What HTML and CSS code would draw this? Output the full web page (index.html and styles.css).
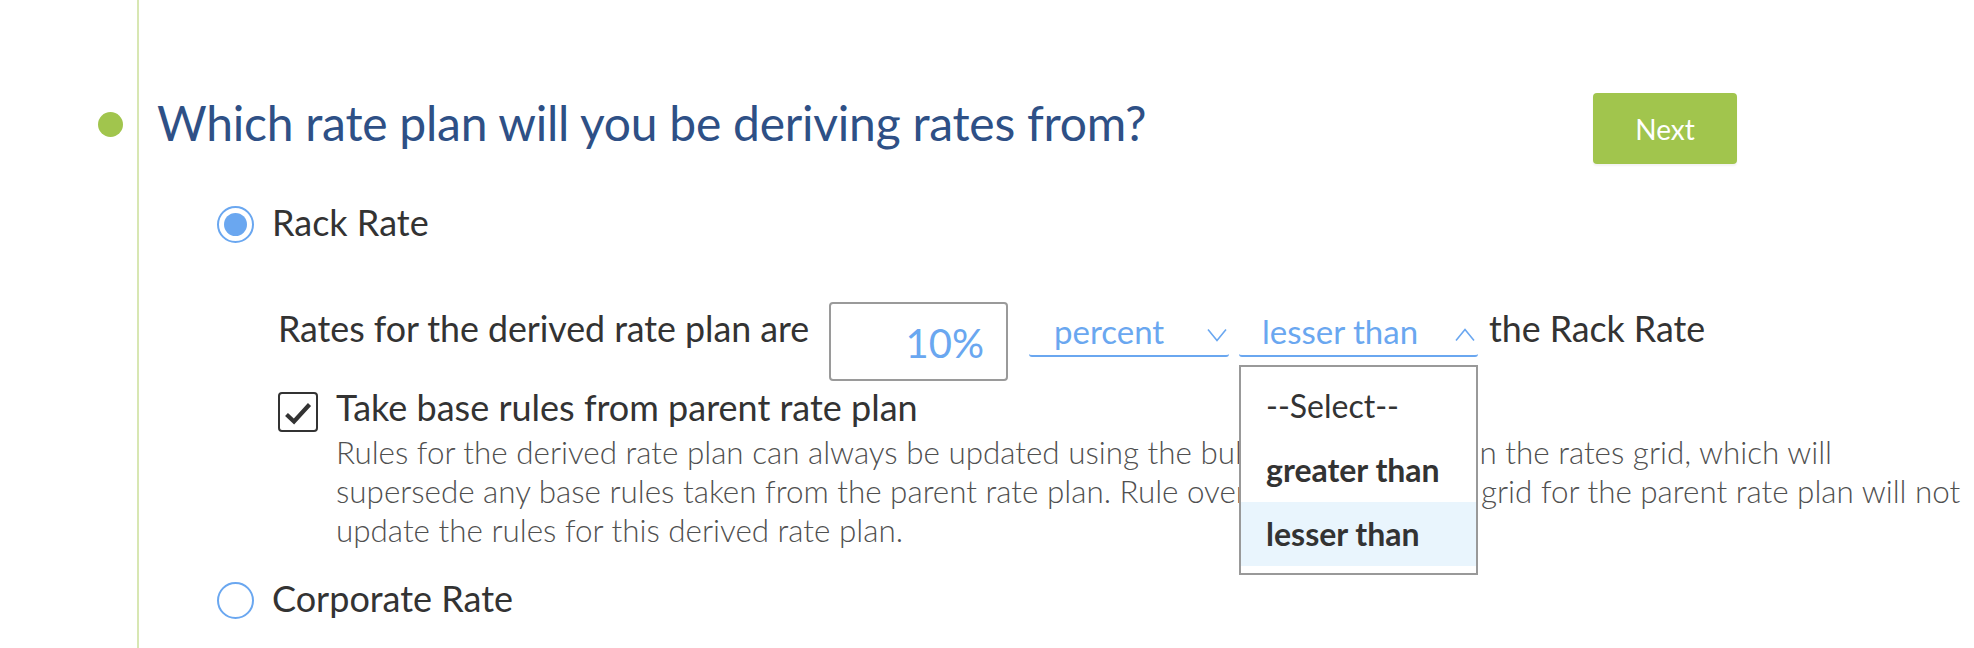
FILE: index.html
```html
<!DOCTYPE html>
<html lang="en">
<head>
<meta charset="utf-8">
<title>Derived rate plan</title>
<link rel="stylesheet" href="styles.css">
</head>
<body>
<div class="timeline">
  <section class="step">
    <div class="step-head">
      <span class="step-dot"></span>
      <h1 class="step-title">Which rate plan will you be deriving rates from?</h1>
      <button class="btn-next" type="button">Next</button>
    </div>

    <div class="option">
      <div class="option-row">
        <span class="radio radio-checked"><span class="radio-dot"></span></span>
        <span class="option-label">Rack Rate</span>
      </div>

      <div class="option-body">
        <div class="rate-row">
          <span class="rate-label">Rates for the derived rate plan are</span>
          <div class="pct-input">10%</div>
          <div class="select select-unit">
            <span class="select-value">percent</span>
            <svg class="chevron" width="20" height="14" viewBox="0 0 20 14"><path d="M1 1.5 L10 12.5 L19 1.5" fill="none" stroke="#6aa7f0" stroke-width="1.6"/></svg>
          </div>
          <div class="select select-compare">
            <span class="select-value">lesser than</span>
            <svg class="chevron" width="20" height="14" viewBox="0 0 20 14"><path d="M1 12.5 L10 1.5 L19 12.5" fill="none" stroke="#6aa7f0" stroke-width="1.6"/></svg>
            <ul class="dropdown">
              <li class="dropdown-item dropdown-placeholder">--Select--</li>
              <li class="dropdown-item">greater than</li>
              <li class="dropdown-item dropdown-active">lesser than</li>
            </ul>
          </div>
          <span class="rate-label rate-tail">the Rack Rate</span>
        </div>

        <div class="check-row">
          <span class="checkbox">
            <svg width="36" height="36" viewBox="0 0 36 36"><path d="M6.5 20.5 L14 27.5 L29.5 10.5" fill="none" stroke="#333" stroke-width="4.2" stroke-linejoin="miter"/></svg>
          </span>
          <div class="check-text">
            <div class="check-title">Take base rules from parent rate plan</div>
            <p class="check-desc">Rules for the derived rate plan can always be updated using the bulk update feature in the rates grid, which will<br>supersede any base rules taken from the parent rate plan. Rule overrides in the rates grid for the parent rate plan will not<br>update the rules for this derived rate plan.</p>
          </div>
        </div>
      </div>
    </div>

    <div class="option option-last">
      <div class="option-row">
        <span class="radio"></span>
        <span class="option-label">Corporate Rate</span>
      </div>
    </div>
  </section>
</div>
</body>
</html>
```

FILE: styles.css
```css
html, body {
  margin: 0;
  padding: 0;
  background: #ffffff;
  height: 100%;
  overflow: hidden;
}

body {
  font-family: Lato, "Open Sans", "Liberation Sans", sans-serif;
  color: #333333;
}

.timeline {
  margin-left: 137px;
  border-left: 2px solid #d8e7b3;
  min-height: 648px;
  padding-left: 18px;
  padding-top: 93px;
  box-sizing: border-box;
}

.step-head {
  position: relative;
  display: flex;
  align-items: flex-start;
  justify-content: space-between;
  width: 1580px;
}

.step-dot {
  position: absolute;
  left: -59px;
  top: 19px;
  width: 25px;
  height: 25px;
  border-radius: 50%;
  background: #a1c54d;
}

.step-title {
  margin: 0;
  font-size: 48px;
  line-height: 60px;
  font-weight: 400;
  color: #2e5086;
  letter-spacing: -0.25px;
}

.btn-next {
  width: 144px;
  height: 71px;
  border: none;
  border-radius: 4px;
  background: #a1c54d;
  color: #ffffff;
  font-family: Lato, "Open Sans", sans-serif;
  font-size: 28px;
  box-shadow: 0 2px 2px rgba(0, 0, 0, 0.05);
  padding: 0;
}

.option {
  margin-left: 60px;
}

.option-row {
  display: flex;
  align-items: flex-start;
  margin-top: 37px;
}

.option-last .option-row {
  margin-top: 27px;
}

.radio {
  width: 37px;
  height: 37px;
  box-sizing: border-box;
  border: 2px solid #6aa7f0;
  border-radius: 50%;
  margin-top: 5px;
  display: flex;
  align-items: center;
  justify-content: center;
  flex: none;
}

.radio-dot {
  width: 23px;
  height: 23px;
  border-radius: 50%;
  background: #6aa7f0;
}

.option-label {
  margin-left: 18px;
  font-size: 36px;
  line-height: 40px;
  padding-top: 1px;
  color: #333333;
}

.option-body {
  margin-left: 61px;
}

.rate-row {
  display: flex;
  align-items: flex-start;
  margin-top: 59px;
}

.rate-label {
  font-size: 35.8px;
  line-height: 42px;
  margin-top: 6px;
  color: #333333;
  white-space: nowrap;
  letter-spacing: -0.05px;
}

.pct-input {
  width: 179px;
  height: 79px;
  box-sizing: border-box;
  border: 2px solid #9a9a9a;
  border-radius: 4px;
  margin-left: 20px;
  padding: 2px 22px 0 0;
  text-align: right;
  font-size: 40px;
  line-height: 75px;
  color: #6aa7f0;
}

.select {
  position: relative;
  display: flex;
  align-items: flex-start;
  justify-content: space-between;
  box-sizing: border-box;
  margin-top: 9px;
  padding-bottom: 4px;
  border-bottom: 2px solid #6aa7f0;
  border-radius: 0 0 3px 3px;
  color: #6aa7f0;
  font-size: 33px;
  line-height: 40px;
}

.select-unit {
  width: 200px;
  margin-left: 21px;
  padding-left: 25px;
  padding-right: 2px;
}

.select-compare {
  width: 239px;
  margin-left: 10px;
  padding-left: 23px;
  padding-right: 3px;
}

.chevron {
  margin-top: 17px;
}

.rate-tail {
  margin-left: 11px;
}

.dropdown {
  position: absolute;
  left: 0;
  top: 54px;
  width: 239px;
  box-sizing: border-box;
  margin: 0;
  padding: 7px 0;
  list-style: none;
  background: #ffffff;
  border: 2px solid #999999;
  z-index: 5;
}

.dropdown-item {
  height: 64px;
  line-height: 64px;
  padding-left: 25px;
  font-size: 32px;
  font-weight: 700;
  color: #333333;
  white-space: nowrap;
}

.dropdown-placeholder {
  font-weight: 400;
}

.dropdown-active {
  background: #e9f5fd;
}

.check-row {
  display: flex;
  align-items: flex-start;
  margin-top: 11px;
}

.checkbox {
  width: 40px;
  height: 40px;
  box-sizing: border-box;
  border: 2px solid #333333;
  border-radius: 4px;
  flex: none;
  display: flex;
}

.check-text {
  margin-left: 18px;
}

.check-title {
  font-size: 36px;
  line-height: 31px;
  color: #333333;
  white-space: nowrap;
}

.check-desc {
  margin: 10px 0 0;
  font-size: 31.4px;
  line-height: 39px;
  font-weight: 300;
  color: #505050;
  white-space: nowrap;
}
```
